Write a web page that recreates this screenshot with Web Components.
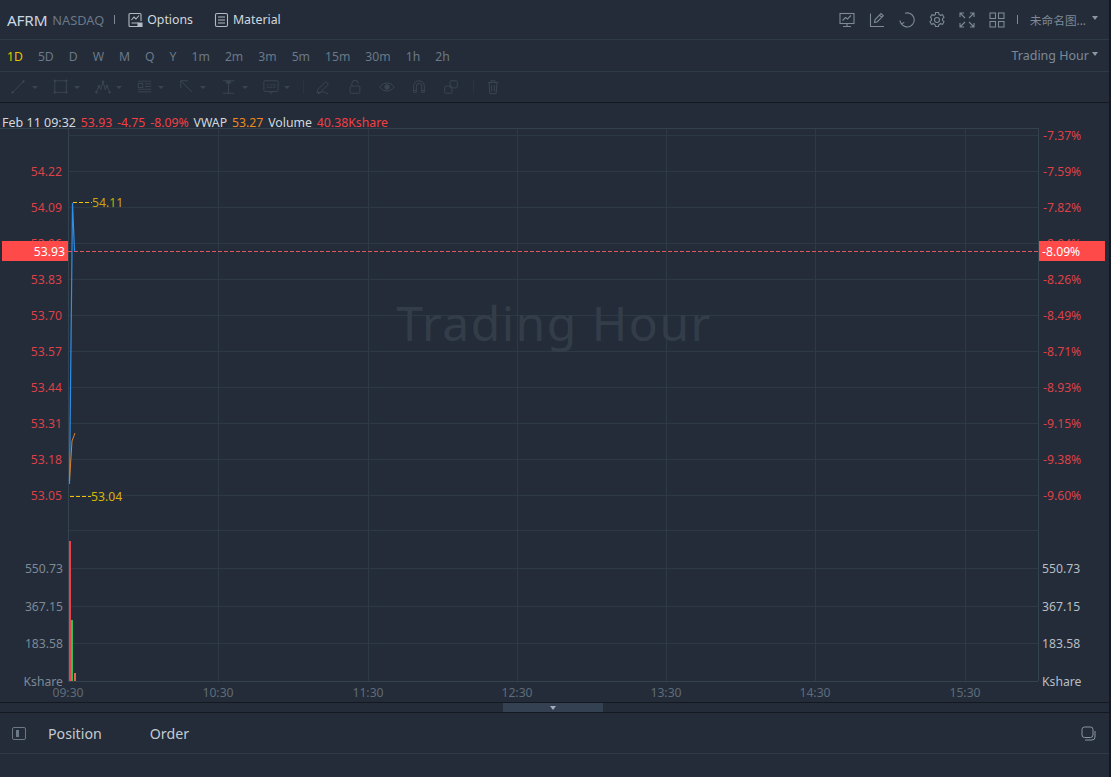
<!DOCTYPE html>
<html lang="en">
<head>
<meta charset="utf-8">
<title>AFRM</title>
<style>
    html, body { margin: 0; padding: 0; height: 100%; background: #232c38; overflow: hidden; }
    body { font-family: "Noto Sans", "Noto Sans CJK SC", sans-serif; }
</style>
</head>
<body>
<app-shell>
    <chart-header></chart-header>
    <period-bar></period-bar>
    <draw-tools></draw-tools>
    <price-chart></price-chart>
    <collapse-handle></collapse-handle>
    <bottom-tabs></bottom-tabs>
</app-shell>

<script>
const FONT = `"Noto Sans", "Noto Sans CJK SC", sans-serif`;

class AppShell extends HTMLElement {
    constructor() {
        super();
        this.attachShadow({ mode: "open" }).innerHTML = `
            <style>
                :host { display: flex; flex-direction: column; width: 1109px; height: 777px; background: #232c38; border-right: 2px solid #14191f; box-sizing: content-box; }
            </style>
            <slot></slot>
        `;
    }
}

class IconButton extends HTMLElement {
    constructor() {
        super();
        this.attachShadow({ mode: "open" }).innerHTML = `
            <style>
                :host { display: inline-flex; align-items: center; justify-content: center; width: 30px; height: 20px; color: #7d8997; }
                svg { width: 18px; height: 18px; fill: none; stroke: currentColor; stroke-width: 1.1; }
            </style>
            <svg viewBox="0 0 18 18">${this.getAttribute("d") || ""}</svg>
        `;
    }
}

class ChartHeader extends HTMLElement {
    constructor() {
        super();
        this.attachShadow({ mode: "open" }).innerHTML = `
            <style>
                :host { display: flex; align-items: center; height: 39px; border-bottom: 1px solid #2f3a47; padding: 0 11px 0 7px; font-size: 12.300px; color: #d3d8de; flex: none; }
                .sym { font-size: 15.300px; color: #c9d6e6; letter-spacing: -.2px; }
                .mkt { font-size: 12.800px; color: #6b7888; margin-left: 5px; }
                .sep { width: 1px; height: 9px; background: #7d8997; margin: 0 13px 0 10px; }
                .link { display: flex; align-items: center; gap: 4px; margin-right: 21px; }
                .link svg { width: 15px; height: 16px; fill: none; stroke: #b3bac2; stroke-width: 1.1; }
                .spacer { flex: 1; }
                .icons { display: flex; margin-right: 1px; }
                .bar { width: 1px; height: 9px; background: #7d8997; margin: 0 12px 0 4px; }
                .name { font-size: 11.700px; color: #7d8997; }
                .caret { width: 0; height: 0; border: 3.500px solid transparent; border-top: 4px solid #8a96a3; border-bottom: 0; margin-left: 6px; margin-top: -4px; }
            </style>
            <span class="sym">AFRM</span>
            <span class="mkt">NASDAQ</span>
            <span class="sep"></span>
            <span class="link">
                <svg viewBox="0 0 15 16"><path d="M13 9V2.500a1 1 0 0 0-1-1H2a1 1 0 0 0-1 1v11a1 1 0 0 0 1 1h8"/><path d="M3.500 8l2.500-3 2 2 3-3.500M3.500 11h7"/><path d="M10 11h4v3.500h-4z" fill="#b3bac2"/></svg>
                Options
            </span>
            <span class="link">
                <svg viewBox="0 0 15 16"><rect x="1.500" y="1.500" width="12" height="13" rx="1.500"/><path d="M4 5h7M4 8h7M4 11h7"/></svg>
                Material
            </span>
            <span class="spacer"></span>
            <span class="icons">
                <icon-button d='<rect x="2" y="2.500" width="14" height="10"/><path d="M4.500 9.500l3-3 2 1.500 3.500-3.500M9 12.500v3M5 15.500h8"/>'></icon-button>
                <icon-button d='<path d="M2.500 2.500v13H16M6.500 11.500l.6-3L13 2.500l2.300 2.300-6 5.900zM11.500 4l2.300 2.300"/>'></icon-button>
                <icon-button d='<path d="M7 2.300A7 7 0 1 1 3.200 12.500M1.800 9.500l1.400 3.200 3.100-1.200"/>'></icon-button>
                <icon-button d='<path d="M7.500 1.500h3l.5 2 1.500.8 2-.6 1.500 2.600-1.500 1.400v1.600l1.500 1.400-1.500 2.600-2-.6-1.500.8-.5 2h-3l-.5-2-1.500-.8-2 .6-1.500-2.600 1.500-1.400V7.700L2.500 6.300 4 3.700l2 .6 1.500-.8z"/><circle cx="9" cy="9" r="2.500"/>'></icon-button>
                <icon-button d='<path d="M2 6V2h4M12 2h4v4M16 12v4h-4M6 16H2v-4M2.500 2.500L7 7M15.500 2.500L11 7M15.500 15.500L11 11M2.500 15.500L7 11"/>'></icon-button>
                <icon-button d='<rect x="2" y="2" width="5.500" height="5.500"/><rect x="10.500" y="2" width="5.500" height="5.500"/><rect x="2" y="10.500" width="5.500" height="5.500"/><rect x="10.500" y="10.500" width="5.500" height="5.500"/>'></icon-button>
            </span>
            <span class="bar"></span>
            <span class="name">未命名图...</span>
            <span class="caret"></span>
        `;
    }
}

class PeriodBar extends HTMLElement {
    constructor() {
        super();
        const periods = ["1D", "5D", "D", "W", "M", "Q", "Y", "1m", "2m", "3m", "5m", "15m", "30m", "1h", "2h"];
        this.attachShadow({ mode: "open" }).innerHTML = `
            <style>
                :host { display: flex; align-items: center; height: 31px; border-bottom: 1px solid #2f3a47; padding: 0 11px 0 7px; font-size: 12.200px; color: #6b7888; flex: none; }
                .list { display: flex; gap: 15px; flex: 1; padding-top: 1px; }
                .on { color: #e6c300; }
                .hour { font-size: 12.500px; color: #7d8997; }
                .caret { width: 0; height: 0; border: 3.500px solid transparent; border-top: 4px solid #8a96a3; border-bottom: 0; margin-left: 3px; margin-top: -3px; }
            </style>
            <div class="list">
                ${periods.map((p, i) => `<span class="${i === 0 ? "on" : ""}">${p}</span>`).join("")}
            </div>
            <span class="hour">Trading Hour</span>
            <span class="caret"></span>
        `;
    }
}

class DrawTools extends HTMLElement {
    constructor() {
        super();
        const tools = [
            [`<path d="M1.500 15.500L14 2.500"/><circle cx="1.800" cy="15" r="1" fill="currentColor"/><circle cx="14" cy="2.800" r="1" fill="currentColor"/>`, 1],
            [`<rect x="2" y="2" width="13" height="13"/><circle cx="2" cy="2" r="1" fill="currentColor"/><circle cx="15" cy="2" r="1" fill="currentColor"/><circle cx="2" cy="15" r="1" fill="currentColor"/><circle cx="15" cy="15" r="1" fill="currentColor"/>`, 1],
            [`<path d="M1.500 15l3-7 2 4 2.500-9 2.500 9 2-4 3 7"/><circle cx="1.500" cy="15" r="1" fill="currentColor"/><circle cx="4.500" cy="8" r="1" fill="currentColor"/><circle cx="9" cy="3" r="1" fill="currentColor"/><circle cx="13.500" cy="8" r="1" fill="currentColor"/><circle cx="16.500" cy="15" r="1" fill="currentColor"/>`, 1],
            [`<path d="M1 2.500h15M9 5.500h7M9 8.500h7M1 11.500h15M1 14.500h15"/><rect x="1.500" y="5" width="5" height="4.500"/>`, 1],
            [`<path d="M2 2l13 13M2 2h8M2 2v8"/>`, 1],
            [`<path d="M2 2h13M2 16h13M8.500 2v14M6 5l2.500-2.500L11 5"/><path d="M6.500 2.500h4v2h-4z" fill="currentColor"/>`, 1],
            [`<rect x="1" y="2" width="16" height="12" rx="1"/><path d="M7 14l2 2.500 2-2.500"/><text x="9" y="10.500" text-anchor="middle" font-size="6.500" fill="currentColor" stroke="none" font-family="Liberation Sans, sans-serif">123</text>`, 1],
            [`<path d="M3 12L12 3l3 3-9 9-3.500.5zM3 16.500c4 0 3-2 6-2s3 2 6 2"/>`, 0],
            [`<rect x="3.500" y="8" width="11" height="8" rx="1"/><path d="M5.500 8V5a3.500 3.500 0 0 1 7 0v.8"/>`, 0],
            [`<path d="M1 9c4-6 12-6 16 0-4 6-12 6-16 0z"/><circle cx="9" cy="9" r="2.500" fill="currentColor"/>`, 0],
            [`<path d="M3 15V8a6 6 0 0 1 12 0v7h-3V8a3 3 0 0 0-6 0v7zM3 13h3M12 13h3"/>`, 0],
            [`<rect x="2" y="8" width="8" height="8" rx="1"/><rect x="8" y="2" width="8" height="8" rx="1"/>`, 0],
            [`<path d="M3 4h12M6.500 4V2h5v2M4.500 4l1 12.500h7l1-12.500M7.500 7v7M10.500 7v7"/>`, 0]
        ];
        const item = ([d, hasCaret], i) => `
            ${i === 7 || i === 12 ? `<b></b>` : ""}
            <span class="tool ${hasCaret ? "wide" : ""}">
                <svg viewBox="0 0 18 18">${d}</svg>
                ${hasCaret ? `<i></i>` : ""}
            </span>`;
        this.attachShadow({ mode: "open" }).innerHTML = `
            <style>
                :host { display: flex; align-items: center; height: 30px; border-bottom: 1px solid #14191f; padding: 0 0 0 11px; color: #3a4553; flex: none; }
                .tool { display: flex; align-items: center; height: 18px; width: 32px; flex: none; }
                .tool.wide { width: 42px; }
                .tool svg { width: 16px; height: 16px; fill: none; stroke: currentColor; stroke-width: 1.100; flex: none; }
                i { width: 0; height: 0; border: 3px solid transparent; border-top: 3px solid #3a4553; border-bottom: 0; margin-left: 5px; }
                b { width: 1px; height: 14px; background: #2a3440; margin: 0 11px 0 -2px; flex: none; }
            </style>
            ${tools.map(item).join("")}
        `;
    }
}

class PriceChart extends HTMLElement {
    constructor() {
        super();
        const vlines = [68, 218, 368, 517, 666, 815, 965];
        const hlines = [135, 171, 207, 243, 279, 315, 351, 387, 423, 459, 495, 530, 568, 606, 643];
        const left = [[171, "54.22"], [207, "54.09"], [279, "53.83"], [315, "53.70"], [351, "53.57"], [387, "53.44"], [423, "53.31"], [459, "53.18"], [495, "53.05"]];
        const right = [[135, "-7.37%"], [171, "-7.59%"], [207, "-7.82%"], [279, "-8.26%"], [315, "-8.49%"], [351, "-8.71%"], [387, "-8.93%"], [423, "-9.15%"], [459, "-9.38%"], [495, "-9.60%"]];
        const vols = [[568, "550.73"], [606, "367.15"], [643, "183.58"]];
        const times = [[68, "09:30"], [218, "10:30"], [368, "11:30"], [517, "12:30"], [666, "13:30"], [815, "14:30"], [965, "15:30"]];
        this.attachShadow({ mode: "open" }).innerHTML = `
            <style>
                :host { display: block; position: relative; height: 599px; flex: none; }
                svg { display: block; width: 1109px; height: 599px; font-family: ${FONT}; font-size: 12.200px; }
                .legend { position: absolute; left: 2px; top: 11px; font-size: 12.300px; line-height: 17px; color: #d3d8de; white-space: nowrap; display: flex; gap: 4.800px; }
                .legend .d { font-size: 12.500px; }
                .r { color: #f23f45; }
                .o { color: #f08a1d; }
                .grid { stroke: #2d3944; stroke-width: 1; shape-rendering: crispEdges; }
                .frame { stroke: #344250; stroke-width: 1; shape-rendering: crispEdges; }
                .red { fill: #dc4148; }
                .grey { fill: #7d8997; }
                .time { fill: #5f6b79; }
            </style>
            <div class="legend">
                <span class="d">Feb 11 09:32</span><span class="r">53.93</span><span class="r">-4.75</span><span class="r">-8.09%</span>
                <span>VWAP</span><span class="o">53.27</span><span>Volume</span><span class="r">40.38Kshare</span>
            </div>
            <svg viewBox="0 103 1109 599">
                <g class="grid">
                    ${hlines.map(y => `<line x1="68" x2="1038" y1="${y + .5}" y2="${y + .5}"/>`).join("")}
                    ${vlines.slice(1).map(x => `<line x1="${x + .5}" x2="${x + .5}" y1="128" y2="681"/>`).join("")}
                </g>
                <g class="frame">
                    <line x1="0" x2="1038" y1="128.500" y2="128.500"/>
                    <line x1="68.500" x2="68.500" y1="128" y2="681"/>
                    <line x1="1038.500" x2="1038.500" y1="128" y2="681"/>
                    <line x1="68" x2="1038" y1="681.500" y2="681.500"/>
                </g>
                <text x="554" y="341" text-anchor="middle" font-size="48" fill="#333d4a" letter-spacing="1.500">Trading Hour</text>
                <g text-anchor="end" class="red">
                    ${left.map(([y, t]) => `<text x="62" y="${y + 5}">${t}</text>`).join("")}
                    <text x="62" y="248">53.96</text>
                </g>
                <g class="red">
                    ${right.map(([y, t]) => `<text x="1043" y="${y + 5}">${t}</text>`).join("")}
                    <text x="1043" y="248">-8.04%</text>
                </g>
                <g text-anchor="end" class="grey">
                    ${vols.map(([y, t]) => `<text x="63" y="${y + 5}">${t}</text>`).join("")}
                    <text x="63" y="686">Kshare</text>
                </g>
                <g fill="#b8bec5">
                    ${vols.map(([y, t]) => `<text x="1042" y="${y + 5}">${t}</text>`).join("")}
                    <text x="1042" y="686">Kshare</text>
                </g>
                <g text-anchor="middle" class="time">
                    ${times.map(([x, t]) => `<text x="${x}" y="697">${t}</text>`).join("")}
                </g>

                <path d="M69.500 484L72.500 203L74.500 251" fill="none" stroke="#2f8fe8" stroke-width="1.200"/>
                <path d="M69.500 481L72 441L75 433" fill="none" stroke="#d9822b" stroke-width="1"/>
                <rect x="69" y="541" width="2" height="140" fill="#e8434c"/>
                <rect x="71" y="620" width="2" height="61" fill="#2fbf5b"/>
                <rect x="74" y="673" width="2" height="8" fill="#e8634c"/>

                <line x1="73" x2="92" y1="202.500" y2="202.500" stroke="#f5c400" stroke-dasharray="4 2"/>
                <text x="92" y="207" fill="#c9a60a">54.11</text>
                <line x1="70" x2="91" y1="496.500" y2="496.500" stroke="#f5c400" stroke-dasharray="4 2"/>
                <text x="91" y="501" fill="#d9b408">53.04</text>

                <line x1="68" x2="1038" y1="251.500" y2="251.500" stroke="#e0585c" stroke-dasharray="4 2"/>
                <rect x="2" y="241" width="66" height="20" fill="#ff4a4a"/>
                <text x="65" y="256" text-anchor="end" fill="#fff">53.93</text>
                <rect x="1039" y="241" width="66" height="20" fill="#ff4a4a"/>
                <text x="1042" y="256" fill="#fff">-8.09%</text>
            </svg>
        `;
    }
}

class CollapseHandle extends HTMLElement {
    constructor() {
        super();
        this.attachShadow({ mode: "open" }).innerHTML = `
            <style>
                :host { display: flex; justify-content: center; height: 9px; border-top: 1px solid #14191f; border-bottom: 1px solid #14191f; flex: none; padding-right: 3px; }
                div { width: 100px; height: 9px; background: #334153; display: flex; align-items: center; justify-content: center; }
                i { width: 0; height: 0; border: 3.500px solid transparent; border-top: 4px solid #a3acb7; border-bottom: 0; }
            </style>
            <div><i></i></div>
        `;
    }
}

class BottomTabs extends HTMLElement {
    constructor() {
        super();
        this.attachShadow({ mode: "open" }).innerHTML = `
            <style>
                :host { display: flex; align-items: center; height: 40px; border-bottom: 1px solid #2f3a47; padding: 0 13px 0 12px; font-size: 14.200px; color: #c3cad2; flex: none; }
                .side { width: 14px; height: 13px; border: 1px solid #6b7888; border-radius: 2px; display: flex; align-items: center; padding-left: 3px; box-sizing: border-box; margin-right: 22px; }
                .side i { width: 3px; height: 7px; background: #6b7888; }
                .tab { margin-right: 48px; }
                .spacer { flex: 1; }
                svg { width: 15px; height: 15px; fill: none; stroke: #8a96a3; stroke-width: 1; }
            </style>
            <span class="side"><i></i></span>
            <span class="tab">Position</span>
            <span class="tab">Order</span>
            <span class="spacer"></span>
            <svg viewBox="0 0 15 15"><rect x="1" y="1" width="11" height="10.500" rx="2.500"/><path d="M14 5v6a3 3 0 0 1-3 3H4"/></svg>
        `;
    }
}

customElements.define("app-shell", AppShell);
customElements.define("icon-button", IconButton);
customElements.define("chart-header", ChartHeader);
customElements.define("period-bar", PeriodBar);
customElements.define("draw-tools", DrawTools);
customElements.define("price-chart", PriceChart);
customElements.define("collapse-handle", CollapseHandle);
customElements.define("bottom-tabs", BottomTabs);
</script>
</body>
</html>
